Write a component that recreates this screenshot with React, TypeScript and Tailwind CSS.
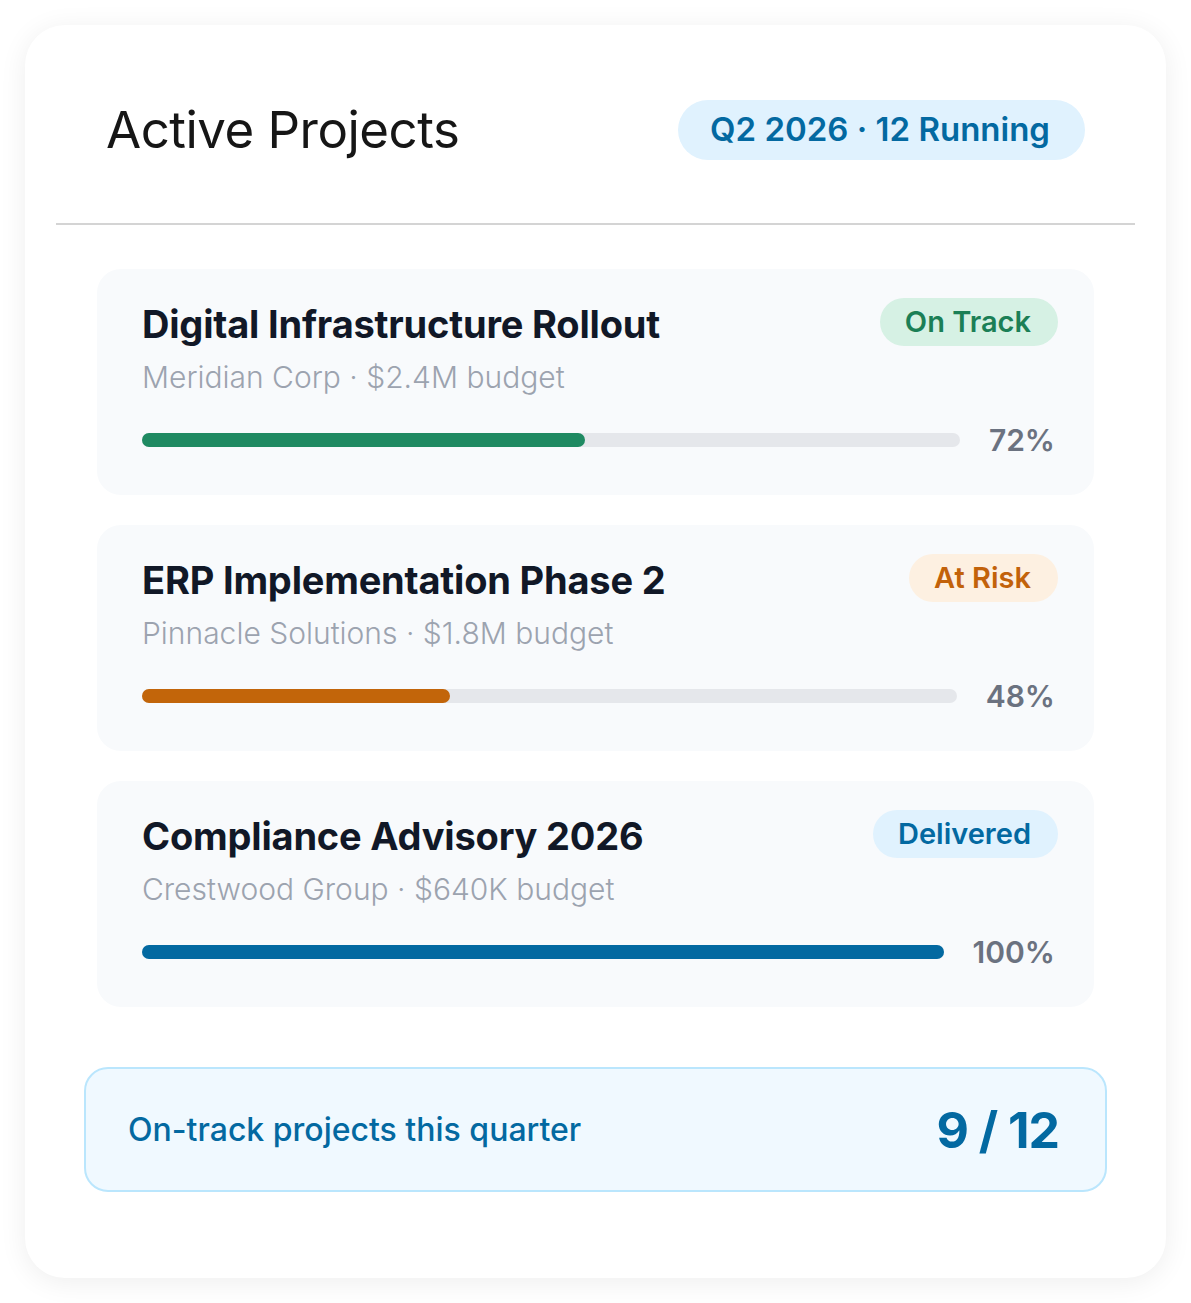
import React from "react";

type Project = {
  name: string;
  client: string;
  budget: string;
  status: string;
  percent: number;
  fill: number;
  badgeClass: string;
  barClass: string;
};

const projects: Project[] = [
  {
    name: "Digital Infrastructure Rollout",
    client: "Meridian Corp",
    budget: "$2.4M budget",
    status: "On Track",
    percent: 72,
    fill: 54.2,
    badgeClass: "bg-[#d6f1e4] text-[#1b7f56]",
    barClass: "bg-[#1f8a62]",
  },
  {
    name: "ERP Implementation Phase 2",
    client: "Pinnacle Solutions",
    budget: "$1.8M budget",
    status: "At Risk",
    percent: 48,
    fill: 37.8,
    badgeClass: "bg-[#fdf0e1] text-[#c2620a]",
    barClass: "bg-[#c2650a]",
  },
  {
    name: "Compliance Advisory 2026",
    client: "Crestwood Group",
    budget: "$640K budget",
    status: "Delivered",
    percent: 100,
    fill: 100,
    badgeClass: "bg-[#e0f2fe] text-[#0369a1]",
    barClass: "bg-[#0369a1]",
  },
];

function ProjectCard({ project }: { project: Project }) {
  return (
    <div className="rounded-[24px] bg-[#f8fafc] pl-[45px] pr-[36px] pt-[29px] pb-[38px]">
      <div className="flex items-start justify-between">
        <div className="mt-1">
          <h3 className="text-[38px] font-bold leading-[44px] tracking-[-0.005em] text-[#111827]">
            {project.name}
          </h3>
          <p className="mt-3 text-[30px] font-light leading-[38px] text-[#9ca3af]">
            {project.client} · {project.budget}
          </p>
        </div>
        <span
          className={`flex h-[48px] items-center rounded-full pl-[25px] pr-[27px] text-[29px] font-semibold ${project.badgeClass}`}
        >
          {project.status}
        </span>
      </div>

      <div className="mt-[27px] flex h-[34px] items-center gap-[29px] pr-[3px]">
        <div className="h-[14px] flex-1 rounded-full bg-[#e5e7eb]">
          <div className={`h-full rounded-full ${project.barClass}`} style={{ width: `${project.fill}%` }} />
        </div>
        <span className="text-[30px] font-semibold leading-[34px] text-[#6b7280]">{project.percent}%</span>
      </div>
    </div>
  );
}

export default function App() {
  return (
    <div className="min-h-screen bg-white p-[25px] font-['Inter',sans-serif]">
      <div className="rounded-[40px] bg-white px-[31px] pt-[75px] pb-[86px] shadow-[0_4px_28px_rgba(0,0,0,0.07)]">
        {/* Header */}
        <div className="flex items-center justify-between px-[50px] pb-[63px]">
          <h1 className="text-[51px] font-normal leading-[60px] tracking-[-0.01em] text-[#161616]">Active Projects</h1>
          <span className="flex h-[60px] items-center rounded-full bg-[#e0f2fe] pl-[32px] pr-[35px] text-[33px] font-semibold text-[#0369a1]">
            Q2 2026 · 12 Running
          </span>
        </div>
        <div className="h-[2px] bg-[#d4d4d4]" />

        {/* Projects */}
        <div className="mt-[44px] flex flex-col gap-[30px] px-[41px]">
          {projects.map((p) => (
            <ProjectCard key={p.name} project={p} />
          ))}
        </div>

        {/* Summary */}
        <div className="mx-[28px] mt-[60px] flex h-[125px] items-center justify-between rounded-[24px] border-2 border-[#bae6fd] bg-[#f0f9ff] pl-[42px] pr-[46px]">
          <span className="text-[32px] font-medium text-[#0369a1]">On-track projects this quarter</span>
          <span className="text-[50px] font-bold leading-none tracking-[-0.02em] text-[#0369a1]">9 / 12</span>
        </div>
      </div>
    </div>
  );
}
